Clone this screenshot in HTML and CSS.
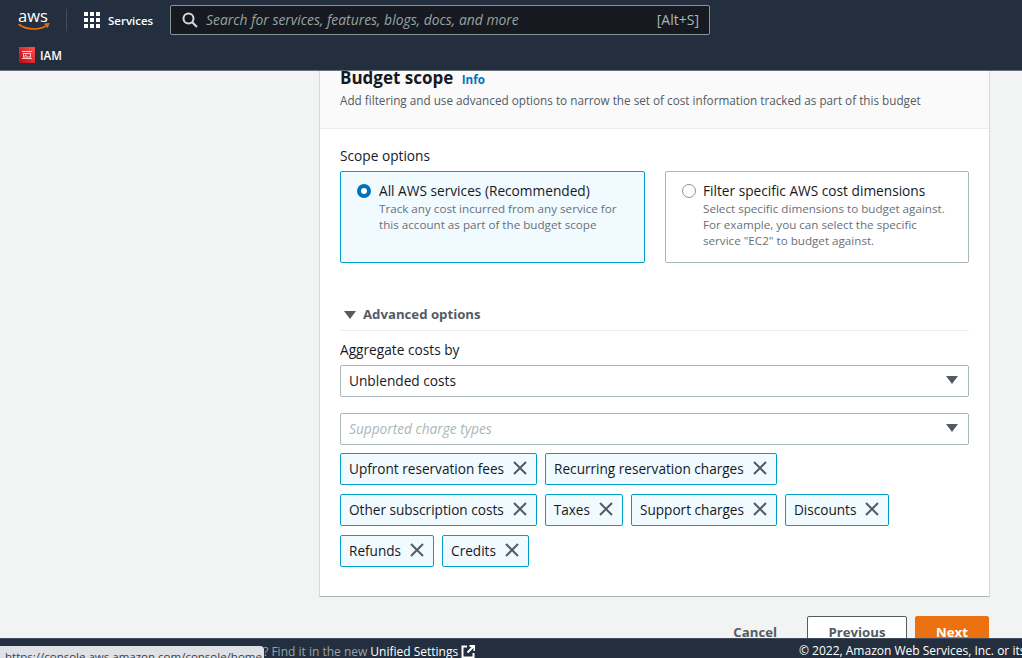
FILE: index.html
```html
<!DOCTYPE html>
<html lang="en">
<head>
    <meta charset="UTF-8">
    <title>Budget scope</title>
    <link rel="stylesheet" href="styles.css">
</head>
<body>
    <header class="topbar">
        <div class="nav-row">
            <a class="aws-logo" href="#">
                <svg width="32" height="22" viewBox="0 0 32 22">
                    <text x="0" y="13" class="aws-word">aws</text>
                    <path d="M1 15.5c4 3 10 4.5 15 4.5 4 0 9-1 13-3.6" fill="none" stroke="#ec7211" stroke-width="1.6" stroke-linecap="round"/>
                    <path d="M26.5 15.2l4-.4-1.2 3.8" fill="none" stroke="#ec7211" stroke-width="1.4"/>
                </svg>
            </a>
            <span class="nav-sep"></span>
            <a class="services" href="#">
                <svg width="16" height="16" viewBox="0 0 16 16" fill="#fff">
                    <rect x="0" y="0" width="4" height="4"/><rect x="6" y="0" width="4" height="4"/><rect x="12" y="0" width="4" height="4"/>
                    <rect x="0" y="6" width="4" height="4"/><rect x="6" y="6" width="4" height="4"/><rect x="12" y="6" width="4" height="4"/>
                    <rect x="0" y="12" width="4" height="4"/><rect x="6" y="12" width="4" height="4"/><rect x="12" y="12" width="4" height="4"/>
                </svg>
                <span>Services</span>
            </a>
            <div class="search">
                <svg width="16" height="16" viewBox="0 0 16 16" fill="none" stroke="#d5dbdb" stroke-width="2">
                    <circle cx="6.5" cy="6.5" r="5"/><path d="M10.2 10.2L15 15"/>
                </svg>
                <span class="search-text">Search for services, features, blogs, docs, and more</span>
                <span class="search-key">[Alt+S]</span>
            </div>
        </div>
        <div class="fav-row">
            <span class="iam-icon">
                <svg width="10" height="10" viewBox="0 0 10 10" fill="none" stroke="#ffc9c9" stroke-width="1">
                    <path d="M0 1.5h10M0 8.5h10"/><rect x="1.5" y="3.5" width="7" height="3.5"/><rect x="2.8" y="4.6" width="1.6" height="1.4" fill="#ffc9c9" stroke="none"/>
                </svg>
            </span>
            <span>IAM</span>
        </div>
    </header>

    <main class="content">
        <section class="card">
            <div class="card-head">
                <h2>Budget scope <a href="#" class="info">Info</a></h2>
                <p>Add filtering and use advanced options to narrow the set of cost information tracked as part of this budget</p>
            </div>
            <div class="card-body">
                <div class="field-label">Scope options</div>
                <div class="tiles">
                    <div class="tile tile-on">
                        <span class="radio radio-on"></span>
                        <div>
                            <div class="tile-title">All AWS services (Recommended)</div>
                            <div class="tile-desc">Track any cost incurred from any service for this account as part of the budget scope</div>
                        </div>
                    </div>
                    <div class="tile">
                        <span class="radio"></span>
                        <div>
                            <div class="tile-title">Filter specific AWS cost dimensions</div>
                            <div class="tile-desc">Select specific dimensions to budget against. For example, you can select the specific service "EC2" to budget against.</div>
                        </div>
                    </div>
                </div>

                <div class="advanced"><span class="caret caret-adv"></span>Advanced options</div>
                <div class="field-label agg-label">Aggregate costs by</div>
                <div class="select"><span>Unblended costs</span><span class="caret"></span></div>
                <div class="select select-ph"><span>Supported charge types</span><span class="caret"></span></div>

                <div class="tag-row">
                    <span class="tag">Upfront reservation fees<svg class="x" viewBox="0 0 14 14"><path d="M1 1l12 12M13 1L1 13"/></svg></span>
                    <span class="tag">Recurring reservation charges<svg class="x" viewBox="0 0 14 14"><path d="M1 1l12 12M13 1L1 13"/></svg></span>
                </div>
                <div class="tag-row">
                    <span class="tag">Other subscription costs<svg class="x" viewBox="0 0 14 14"><path d="M1 1l12 12M13 1L1 13"/></svg></span>
                    <span class="tag">Taxes<svg class="x" viewBox="0 0 14 14"><path d="M1 1l12 12M13 1L1 13"/></svg></span>
                    <span class="tag">Support charges<svg class="x" viewBox="0 0 14 14"><path d="M1 1l12 12M13 1L1 13"/></svg></span>
                    <span class="tag">Discounts<svg class="x" viewBox="0 0 14 14"><path d="M1 1l12 12M13 1L1 13"/></svg></span>
                </div>
                <div class="tag-row">
                    <span class="tag">Refunds<svg class="x" viewBox="0 0 14 14"><path d="M1 1l12 12M13 1L1 13"/></svg></span>
                    <span class="tag">Credits<svg class="x" viewBox="0 0 14 14"><path d="M1 1l12 12M13 1L1 13"/></svg></span>
                </div>
            </div>
        </section>
        <div class="actions">
            <a href="#" class="cancel">Cancel</a>
            <button class="btn">Previous</button>
            <button class="btn btn-primary">Next</button>
        </div>
    </main>

    <footer class="footer">
        <div class="foot-left">Looking for language selection? Find it in the new <a href="#">Unified Settings</a>
            <svg width="14" height="14" viewBox="0 0 14 14" fill="none" stroke="#fff" stroke-width="2"><path d="M6 1.5H1.5v11h11V8M6.5 7.5L12.5 1.5M8.5 1h5v5"/></svg>
        </div>
        <div class="foot-right">© 2022, Amazon Web Services, Inc. or its affiliates.</div>
        <div class="status-tip">https://console.aws.amazon.com/console/home</div>
    </footer>
</body>
</html>
```

FILE: styles.css
```css
* {
    box-sizing: border-box;
}
html, body {
    margin: 0;
    height: 658px;
    overflow: hidden;
}
body {
    font-family: "Open Sans", "Noto Sans", sans-serif;
    font-size: 13.7px;
    color: #16191f;
    background: #f2f3f3;
    display: flex;
    flex-direction: column;
}
a {
    text-decoration: none;
}

/* top bar */
.topbar {
    height: 71px;
    flex: none;
    background: #232f3e;
    border-bottom: 1px solid #687078;
    color: #fff;
}
.nav-row {
    height: 40px;
    display: flex;
    align-items: center;
    padding-left: 18px;
}
.aws-logo {
    display: block;
    width: 32px;
    height: 22px;
}
.aws-word {
    font-family: "Open Sans", sans-serif;
    font-size: 16.5px;
    fill: #fff;
}
.nav-sep {
    width: 1px;
    height: 22px;
    background: #414d5c;
    margin: 0 17px 0 16px;
}
.services {
    display: flex;
    align-items: center;
    gap: 8px;
    color: #fff;
    font-size: 11.5px;
    font-weight: 600;
    width: 86px;
}
.search {
    width: 540px;
    height: 30px;
    background: #16191f;
    border: 1px solid #879596;
    border-radius: 2px;
    display: flex;
    align-items: center;
    padding: 0 10px 1px 11px;
    gap: 8px;
    font-size: 13.9px;
    color: #95a5a6;
}
.search-text {
    flex: 1;
    font-style: italic;
}
.search-key {
    font-size: 14px;
    color: #aab7b8;
}
.fav-row {
    height: 30px;
    display: flex;
    align-items: center;
    gap: 5px;
    padding-left: 19px;
    font-size: 11.6px;
    font-weight: 600;
}
.iam-icon {
    width: 16px;
    height: 16px;
    background: linear-gradient(45deg, #bd0816, #ff5252);
    display: flex;
    align-items: center;
    justify-content: center;
}

/* main area */
.content {
    flex: 1;
    min-height: 0;
    overflow: hidden;
    padding-left: 319px;
    width: 990px;
}
.card {
    background: #fff;
    border: 1px solid #d5dbdb;
    border-top: none;
    border-bottom: 1px solid #aab7b8;
    height: 526px;
}
.card-head {
    height: 58px;
    background: #fafafa;
    border-bottom: 1px solid #eaeded;
    padding: 0 20px;
}
.card-head h2 {
    margin: 0;
    font-size: 17px;
    line-height: 13px;
    font-weight: 700;
}
.info {
    font-size: 11.6px;
    font-weight: 700;
    color: #0073bb;
    margin-left: 4px;
}
.card-head p {
    margin: 6px 0 0;
    font-size: 11.72px;
    line-height: 16px;
    color: #545b64;
}
.card-body {
    padding: 17px 20px 0;
}
.field-label {
    line-height: 20px;
    font-size: 13.7px;
}
.tiles {
    display: grid;
    grid-template-columns: 305px 304px;
    gap: 20px;
    margin-top: 5px;
}
.tile {
    height: 92px;
    border: 1px solid #aab7b8;
    border-radius: 2px;
    padding: 11px 16px;
    display: flex;
    gap: 7px;
}
.tile-on {
    background: #f1faff;
    border-color: #00a1c9;
    gap: 8px;
}
.radio {
    flex: none;
    width: 14px;
    height: 14px;
    margin-top: 1px;
    border: 1px solid #879596;
    border-radius: 50%;
    background: #fff;
}
.radio-on {
    border: 4px solid #0073bb;
}
.tile-title {
    line-height: 16px;
    font-size: 13.7px;
}
.tile-desc {
    margin-top: 2px;
    font-size: 11.65px;
    line-height: 16px;
    color: #687078;
}
.advanced {
    margin-top: 41px;
    height: 27px;
    padding-bottom: 5px;
    border-bottom: 1px solid #eaeded;
    font-weight: 700;
    color: #545b64;
    font-size: 13.2px;
    line-height: 21px;
    display: flex;
    align-items: center;
    gap: 7px;
    padding-left: 4px;
}
.agg-label {
    margin-top: 9px;
    margin-bottom: 5px;
}
.caret {
    width: 0;
    height: 0;
    border-left: 6px solid transparent;
    border-right: 6px solid transparent;
    border-top: 8px solid #545b64;
}
.select {
    height: 32px;
    border: 1px solid #aab7b8;
    border-radius: 2px;
    padding: 0 10px 2px 8px;
    display: flex;
    align-items: center;
    justify-content: space-between;
    margin-bottom: 16px;
}
.select-ph {
    font-style: italic;
    color: #aab7b8;
    margin-bottom: 8px;
}
.tag-row {
    display: flex;
    gap: 8px;
    margin-bottom: 9px;
}
.tag {
    height: 32px;
    background: #f1faff;
    border: 1px solid #00a1c9;
    border-radius: 2px;
    padding: 0 9px 2px 8px;
    display: flex;
    align-items: center;
    gap: 9px;
    font-size: 13.6px;
}
.x {
    width: 14px;
    height: 14px;
    fill: none;
    stroke: #545b64;
    stroke-width: 2;
}
.actions {
    display: flex;
    justify-content: flex-end;
    align-items: center;
    gap: 8px;
    margin-top: 19px;
}
.cancel {
    color: #545b64;
    font-weight: 700;
    font-size: 13.2px;
    margin-right: 22px;
}
.btn {
    width: 100px;
    height: 32px;
    font-family: inherit;
    font-size: 13.2px;
    font-weight: 700;
    color: #545b64;
    background: #fff;
    border: 1px solid #545b64;
    border-radius: 2px;
}
.btn-primary {
    width: 74px;
    margin-right: 1px;
    background: #ec7211;
    border-color: #ec7211;
    color: #fff;
}

/* footer */
.footer {
    position: relative;
    height: 20px;
    flex: none;
    background: #232f3e;
    border-top: 1px solid #414d5c;
    color: #95a5a6;
    font-size: 12px;
    white-space: nowrap;
    overflow: hidden;
    display: flex;
    justify-content: space-between;
    padding-top: 3px;
}
.foot-left {
    padding-left: 93px;
    display: flex;
    gap: 3px;
    align-items: center;
    height: 19px;
}
.foot-left a {
    color: #fff;
}
.foot-right {
    color: #fff;
    position: absolute;
    left: 799px;
    top: 3px;
}
.status-tip {
    position: absolute;
    left: 0;
    top: 7px;
    width: 264px;
    height: 13px;
    background: #dee1e6;
    border-top-right-radius: 4px;
    color: #3c4043;
    padding-left: 5px;
    font-size: 11.5px;
    line-height: 21px;
}
```
